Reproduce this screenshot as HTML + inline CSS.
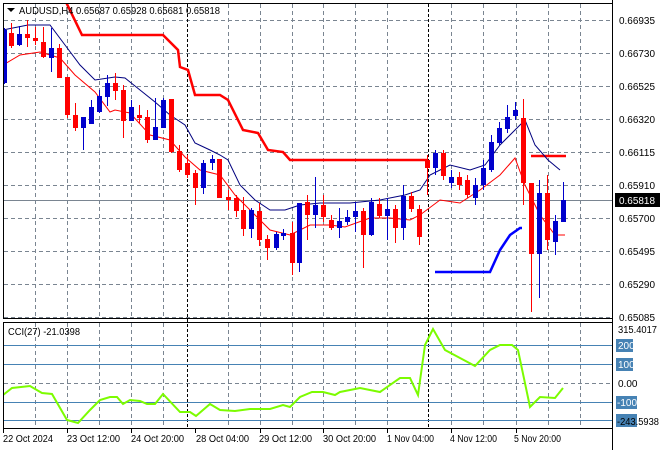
<!DOCTYPE html>
<html><head><meta charset="utf-8"><style>
body{margin:0;background:#fff;width:660px;height:450px;overflow:hidden;font-family:"Liberation Sans",sans-serif}
svg text{font-family:"Liberation Sans",sans-serif;font-size:10px;fill:#000}
</style></head><body>
<svg width="660" height="450" xmlns="http://www.w3.org/2000/svg">
<defs><clipPath id="m"><rect x="4" y="4" width="608" height="314"/></clipPath>
<clipPath id="c"><rect x="4" y="323" width="608" height="105"/></clipPath></defs>
<g stroke="#7a8591" stroke-dasharray="4,3" stroke-width="1">
<path d="M4 20.5H612M4 53.5H612M4 86.5H612M4 119.5H612M4 152.5H612M4 185.5H612M4 218.5H612M4 251.5H612M4 284.5H612M4 317.5H612"/>
<path d="M35.5 4V318M67.5 4V318M99.5 4V318M131.5 4V318M163.5 4V318M228.5 4V318M260.5 4V318M292.5 4V318M323.5 4V318M355.5 4V318M387.5 4V318M451.5 4V318M483.5 4V318M516.5 4V318M548.5 4V318M580.5 4V318"/>
<path d="M35.5 323V428M67.5 323V428M99.5 323V428M131.5 323V428M163.5 323V428M228.5 323V428M260.5 323V428M292.5 323V428M323.5 323V428M355.5 323V428M387.5 323V428M451.5 323V428M483.5 323V428M516.5 323V428M548.5 323V428M580.5 323V428M4 383.5H612"/>
</g>
<g stroke="#000" stroke-dasharray="3,2"><path d="M187.5 4V428M428.5 4V428"/></g>
<path d="M4 200.5H612" stroke="#7a8591"/>
<g clip-path="url(#m)">
<polyline fill="none" stroke="#f00" stroke-width="2.5" points="65,0 82,35 163,35 178,50 180,67 188,70 195,95 220,95 228,100 243,130 258,133 268,150 283,152 290,160 428,160"/>
<polyline fill="none" stroke="#f00" stroke-width="2.5" points="531,156 566,156"/>
<polyline fill="none" stroke="#00f" stroke-width="2.5" points="435,272 490,272 500,250 510,235 520,228 522,228"/>
<polyline fill="none" stroke="#00007f" stroke-width="1" points="3,30 28,25 50,25 65,45 80,65 95,80 115,77 125,78 140,90 155,102 170,115 185,125 195,143 210,150 220,155 228,160 240,185 255,200 270,210 285,210 300,205 320,203 350,203 380,200 405,195 420,190 430,175 450,165 470,170 485,165 500,145 515,130 525,120 535,145 548,160 560,170"/>
<polyline fill="none" stroke="#f00" stroke-width="1" points="3,65 20,55 40,52 60,58 75,75 95,92 110,112 115,110 130,113 150,135 170,140 185,157 200,170 220,175 235,195 250,210 270,230 290,235 310,225 330,225 345,227 370,218 390,218 410,220 420,215 440,200 460,203 480,190 500,175 515,158 525,185 540,215 555,235 565,235"/>
</g>
<rect x="3.5" y="3.5" width="609" height="315" fill="none" stroke="#000"/>
<rect x="3.5" y="322.5" width="609" height="106" fill="none" stroke="#000"/>
<g stroke="#4682b4"><path d="M4 345.5H612M4 364.5H612M4 402.5H612M4 420.5H612"/></g>
<polyline clip-path="url(#c)" fill="none" stroke="#7cfc00" stroke-width="2" points="3,395 12,388 30,386 42,393 52,394 67,420 78,423 90,410 100,400 110,397 117,397 123,404 130,400 140,401 147,404 155,404 163,394 180,412 190,412 196,416 210,404 220,410 235,411 250,409 270,409 283,405 290,407 300,397 312,392 323,392 335,395 340,392 360,388 380,392 400,378 410,378 418,395 425,345 433,329 445,350 460,358 475,366 490,350 500,345 512,345 518,350 530,407 540,397 555,398 563,388"/>
<path d="M7 8l4 4 4-4z" fill="#000"/>
<text x="19" y="14" textLength="201" lengthAdjust="spacingAndGlyphs">AUDUSD,H4  0.65687 0.65928 0.65681 0.65818</text>
<text x="8" y="335" textLength="72" lengthAdjust="spacingAndGlyphs">CCI(27) -21.0398</text>
<g>
<text x="619" y="24" textLength="36" lengthAdjust="spacingAndGlyphs">0.66935</text><text x="619" y="57" textLength="36" lengthAdjust="spacingAndGlyphs">0.66730</text><text x="619" y="90" textLength="36" lengthAdjust="spacingAndGlyphs">0.66525</text><text x="619" y="123" textLength="36" lengthAdjust="spacingAndGlyphs">0.66320</text><text x="619" y="156" textLength="36" lengthAdjust="spacingAndGlyphs">0.66115</text><text x="619" y="189" textLength="36" lengthAdjust="spacingAndGlyphs">0.65910</text><text x="619" y="222" textLength="36" lengthAdjust="spacingAndGlyphs">0.65700</text><text x="619" y="255" textLength="36" lengthAdjust="spacingAndGlyphs">0.65495</text><text x="619" y="288" textLength="36" lengthAdjust="spacingAndGlyphs">0.65290</text><text x="619" y="321" textLength="36" lengthAdjust="spacingAndGlyphs">0.65085</text>
<rect x="615" y="193" width="45" height="14" fill="#000"/><text x="619" y="204" style="fill:#fff" textLength="36" lengthAdjust="spacingAndGlyphs">0.65818</text>
<text x="618" y="333" textLength="39" lengthAdjust="spacingAndGlyphs">315.4017</text>
<rect x="616" y="339" width="17" height="13" fill="#4682b4"/><text x="618" y="349" style="fill:#fff">200</text>
<rect x="616" y="358" width="17" height="13" fill="#4682b4"/><text x="618" y="368" style="fill:#fff">100</text>
<text x="618" y="387">0.00</text>
<rect x="616" y="396" width="21" height="13" fill="#4682b4"/><text x="617" y="406" style="fill:#fff">-100</text>
<rect x="616" y="414" width="21" height="13" fill="#4682b4"/><text x="617" y="425" textLength="42" lengthAdjust="spacingAndGlyphs">-243.5938</text>
</g>
<g stroke="#000"><path d="M3.5 428V433M67.5 428V433M131.5 428V433M195.5 428V433M260.5 428V433M323.5 428V433M387.5 428V433M451.5 428V433M516.5 428V433M612.5 0V450"/></g>
<g>
<text x="3" y="442" textLength="50" lengthAdjust="spacingAndGlyphs">22 Oct 2024</text><text x="67" y="442" textLength="53" lengthAdjust="spacingAndGlyphs">23 Oct 12:00</text><text x="131" y="442" textLength="53" lengthAdjust="spacingAndGlyphs">24 Oct 20:00</text><text x="196" y="442" textLength="53" lengthAdjust="spacingAndGlyphs">28 Oct 04:00</text><text x="259" y="442" textLength="53" lengthAdjust="spacingAndGlyphs">29 Oct 12:00</text><text x="323" y="442" textLength="53" lengthAdjust="spacingAndGlyphs">30 Oct 20:00</text><text x="387" y="442" textLength="47" lengthAdjust="spacingAndGlyphs">1 Nov 04:00</text><text x="450" y="442" textLength="47" lengthAdjust="spacingAndGlyphs">4 Nov 12:00</text><text x="514" y="442" textLength="47" lengthAdjust="spacingAndGlyphs">5 Nov 20:00</text>
</g>
<g clip-path="url(#m)">
<path stroke="#00c" d="M4.5 28V84"/><rect x="2" y="30" width="5" height="53" fill="#00c"/>
<path stroke="#f00" d="M11.5 23V48"/><rect x="9" y="33" width="5" height="13" fill="#f00"/>
<path stroke="#00c" d="M19.5 26V46"/><rect x="17" y="34" width="5" height="11" fill="#00c"/>
<path stroke="#f00" d="M27.5 20V47"/><rect x="25" y="34" width="5" height="4" fill="#f00"/>
<path stroke="#f00" d="M35.5 27V45"/><rect x="33" y="38" width="5" height="3" fill="#f00"/>
<path stroke="#f00" d="M43.5 27V58"/><rect x="41" y="42" width="5" height="15" fill="#f00"/>
<path stroke="#00c" d="M51.5 28V72"/><rect x="49" y="48" width="5" height="10" fill="#00c"/>
<path stroke="#f00" d="M59.5 44V78"/><rect x="57" y="48" width="5" height="30" fill="#f00"/>
<path stroke="#f00" d="M67.5 77V118"/><rect x="65" y="77" width="5" height="38" fill="#f00"/>
<path stroke="#f00" d="M75.5 103V131"/><rect x="73" y="115" width="5" height="13" fill="#f00"/>
<path stroke="#00c" d="M83.5 117V150"/><rect x="81" y="117" width="5" height="11" fill="#00c"/>
<path stroke="#00c" d="M91.5 100V124"/><rect x="89" y="107" width="5" height="17" fill="#00c"/>
<path stroke="#00c" d="M99.5 90V113"/><rect x="97" y="96" width="5" height="16" fill="#00c"/>
<path stroke="#00c" d="M107.5 75V106"/><rect x="105" y="83" width="5" height="14" fill="#00c"/>
<path stroke="#f00" d="M115.5 73V100"/><rect x="113" y="83" width="5" height="8" fill="#f00"/>
<path stroke="#f00" d="M123.5 85V138"/><rect x="121" y="90" width="5" height="31" fill="#f00"/>
<path stroke="#00c" d="M131.5 100V121"/><rect x="129" y="107" width="5" height="14" fill="#00c"/>
<path stroke="#f00" d="M139.5 105V123"/><rect x="137" y="115" width="5" height="3" fill="#f00"/>
<path stroke="#f00" d="M147.5 110V143"/><rect x="145" y="117" width="5" height="23" fill="#f00"/>
<path stroke="#00c" d="M155.5 98V135"/><rect x="153" y="127" width="5" height="13" fill="#00c"/>
<path stroke="#00c" d="M163.5 98V128"/><rect x="161" y="100" width="5" height="28" fill="#00c"/>
<path stroke="#f00" d="M171.5 99V153"/><rect x="169" y="99" width="5" height="53" fill="#f00"/>
<path stroke="#f00" d="M179.5 145V172"/><rect x="177" y="151" width="5" height="19" fill="#f00"/>
<path stroke="#f00" d="M187.5 155V178"/><rect x="185" y="163" width="5" height="12" fill="#f00"/>
<path stroke="#f00" d="M195.5 170V205"/><rect x="193" y="173" width="5" height="15" fill="#f00"/>
<path stroke="#00c" d="M203.5 160V194"/><rect x="201" y="163" width="5" height="25" fill="#00c"/>
<path stroke="#00c" d="M212.5 155V170"/><rect x="210" y="159" width="5" height="4" fill="#00c"/>
<path stroke="#f00" d="M219.5 159V198"/><rect x="217" y="159" width="5" height="39" fill="#f00"/>
<path stroke="#f00" d="M228.5 190V210"/><rect x="226" y="197" width="5" height="3" fill="#f00"/>
<path stroke="#f00" d="M236.5 195V217"/><rect x="234" y="198" width="5" height="13" fill="#f00"/>
<path stroke="#f00" d="M243.5 197V236"/><rect x="241" y="210" width="5" height="19" fill="#f00"/>
<path stroke="#00c" d="M251.5 208V238"/><rect x="249" y="210" width="5" height="19" fill="#00c"/>
<path stroke="#f00" d="M259.5 203V246"/><rect x="257" y="211" width="5" height="29" fill="#f00"/>
<path stroke="#f00" d="M267.5 235V260"/><rect x="265" y="239" width="5" height="9" fill="#f00"/>
<path stroke="#00c" d="M276.5 232V250"/><rect x="274" y="234" width="5" height="14" fill="#00c"/>
<path stroke="#00c" d="M283.5 229V240"/><rect x="281" y="233" width="5" height="3" fill="#00c"/>
<path stroke="#f00" d="M292.5 222V275"/><rect x="290" y="233" width="5" height="30" fill="#f00"/>
<path stroke="#00c" d="M299.5 203V272"/><rect x="297" y="203" width="5" height="60" fill="#00c"/>
<path stroke="#f00" d="M307.5 195V240"/><rect x="305" y="202" width="5" height="13" fill="#f00"/>
<path stroke="#00c" d="M315.5 177V228"/><rect x="313" y="205" width="5" height="10" fill="#00c"/>
<path stroke="#f00" d="M323.5 195V222"/><rect x="321" y="205" width="5" height="12" fill="#f00"/>
<path stroke="#f00" d="M331.5 215V230"/><rect x="329" y="220" width="5" height="8" fill="#f00"/>
<path stroke="#00c" d="M339.5 208V238"/><rect x="337" y="221" width="5" height="7" fill="#00c"/>
<path stroke="#00c" d="M347.5 210V225"/><rect x="345" y="217" width="5" height="5" fill="#00c"/>
<path stroke="#00c" d="M355.5 202V232"/><rect x="353" y="211" width="5" height="6" fill="#00c"/>
<path stroke="#f00" d="M363.5 208V268"/><rect x="361" y="211" width="5" height="24" fill="#f00"/>
<path stroke="#00c" d="M371.5 198V236"/><rect x="369" y="202" width="5" height="33" fill="#00c"/>
<path stroke="#f00" d="M379.5 198V218"/><rect x="377" y="204" width="5" height="12" fill="#f00"/>
<path stroke="#00c" d="M387.5 198V240"/><rect x="385" y="209" width="5" height="7" fill="#00c"/>
<path stroke="#f00" d="M395.5 205V243"/><rect x="393" y="209" width="5" height="19" fill="#f00"/>
<path stroke="#00c" d="M403.5 185V240"/><rect x="401" y="196" width="5" height="32" fill="#00c"/>
<path stroke="#f00" d="M411.5 192V212"/><rect x="409" y="196" width="5" height="13" fill="#f00"/>
<path stroke="#f00" d="M419.5 205V245"/><rect x="417" y="209" width="5" height="28" fill="#f00"/>
<path stroke="#f00" d="M427.5 155V195"/><rect x="425" y="160" width="5" height="8" fill="#f00"/>
<path stroke="#00c" d="M435.5 150V175"/><rect x="433" y="153" width="5" height="15" fill="#00c"/>
<path stroke="#f00" d="M443.5 150V180"/><rect x="441" y="153" width="5" height="23" fill="#f00"/>
<path stroke="#00c" d="M451.5 170V188"/><rect x="449" y="177" width="5" height="6" fill="#00c"/>
<path stroke="#f00" d="M459.5 172V190"/><rect x="457" y="177" width="5" height="8" fill="#f00"/>
<path stroke="#f00" d="M467.5 175V198"/><rect x="465" y="180" width="5" height="15" fill="#f00"/>
<path stroke="#00c" d="M475.5 178V205"/><rect x="473" y="185" width="5" height="13" fill="#00c"/>
<path stroke="#00c" d="M483.5 160V190"/><rect x="481" y="168" width="5" height="17" fill="#00c"/>
<path stroke="#00c" d="M491.5 135V172"/><rect x="489" y="142" width="5" height="28" fill="#00c"/>
<path stroke="#00c" d="M499.5 122V145"/><rect x="497" y="128" width="5" height="15" fill="#00c"/>
<path stroke="#00c" d="M507.5 105V133"/><rect x="505" y="117" width="5" height="12" fill="#00c"/>
<path stroke="#00c" d="M515.5 102V120"/><rect x="513" y="110" width="5" height="6" fill="#00c"/>
<path stroke="#f00" d="M523.5 99V205"/><rect x="521" y="118" width="5" height="65" fill="#f00"/>
<path stroke="#f00" d="M531.5 183V312"/><rect x="529" y="183" width="5" height="71" fill="#f00"/>
<path stroke="#00c" d="M539.5 180V298"/><rect x="537" y="193" width="5" height="61" fill="#00c"/>
<path stroke="#f00" d="M547.5 175V250"/><rect x="545" y="193" width="5" height="47" fill="#f00"/>
<path stroke="#00c" d="M555.5 215V255"/><rect x="553" y="221" width="5" height="21" fill="#00c"/>
<path stroke="#00c" d="M563.5 182V222"/><rect x="561" y="200" width="5" height="22" fill="#00c"/>
</g>
</svg>
</body></html>
